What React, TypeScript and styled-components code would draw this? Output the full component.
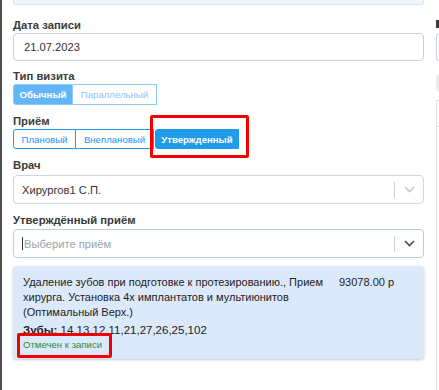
import React from 'react';
import styled, { createGlobalStyle } from 'styled-components';

const GlobalStyle = createGlobalStyle`
    body {
        margin: 0;
        background: #fff;
        font-family: "Liberation Sans", Arial, sans-serif;
        color: #333;
    }
`;

const Page = styled.div`
    display: flex;
    height: 390px;
    border-left: 2px solid #4f4f4f;
    overflow: hidden;
`;

const FormColumn = styled.div`
    width: 411px;
    margin-left: 11px;
    flex-shrink: 0;
`;

const TopBox = styled.div`
    height: 4px;
    background: #eef5fd;
    border: 1px solid #dce4ee;
    border-top: none;
    border-radius: 0 0 3px 3px;
`;

const Field = styled.div<{ $top?: number }>`
    margin-top: ${p => p.$top ?? 8}px;
`;

const Label = styled.div<{ $gap?: number }>`
    font-size: 11.3px;
    font-weight: 700;
    line-height: 16px;
    color: #3a3a3a;
    margin-bottom: ${p => p.$gap ?? 0}px;
`;

const TextInput = styled.div`
    height: 28px;
    box-sizing: border-box;
    border: 1px solid #c6d2e2;
    border-radius: 4px;
    padding: 0 10px;
    display: flex;
    align-items: center;
    font-size: 11.2px;
    color: #333;
`;

const Segments = styled.div`
    display: flex;
    align-items: stretch;
`;

const Segment = styled.div<{ $active?: boolean; $tone: 'soft' | 'strong'; $h: number; $w: number }>`
    box-sizing: border-box;
    height: ${p => p.$h}px;
    width: ${p => p.$w}px;
    display: flex;
    align-items: center;
    justify-content: center;
    font-size: 9.6px;
    font-weight: ${p => (p.$active ? 700 : 400)};
    color: ${p => (p.$active ? '#fff' : p.$tone === 'soft' ? '#8ec4f2' : '#2196f3')};
    background: ${p => (p.$active ? (p.$tone === 'soft' ? '#62b6f6' : '#1e9be9') : '#fff')};
    border: 1px solid ${p => (p.$tone === 'soft' ? '#90cbf7' : '#1e9be9')};
    &:first-child {
        border-radius: 3px 0 0 3px;
    }
    & + & {
        border-left: none;
    }
`;

const LastSegment = styled(Segment)`
    border-radius: 3px;
    margin-left: 1px;
    && {
        border-left: 1px solid #1e9be9;
    }
`;

const Marked = styled.div`
    position: relative;
    display: inline-flex;
`;

const RedFrame = styled.div<{ $t: number; $r: number; $b: number; $l: number }>`
    position: absolute;
    top: ${p => -p.$t}px;
    right: ${p => -p.$r}px;
    bottom: ${p => -p.$b}px;
    left: ${p => -p.$l}px;
    border: 3px solid #f20000;
    border-radius: 2px;
    pointer-events: none;
`;

const Select = styled.div<{ $muted?: boolean }>`
    height: 29px;
    box-sizing: border-box;
    border: 1px solid ${p => (p.$muted ? '#cdd7e4' : '#bccbe0')};
    border-radius: 4px;
    display: flex;
    align-items: center;
    font-size: 11.2px;
`;

const SelectValue = styled.div<{ $placeholder?: boolean }>`
    flex: 1;
    padding-left: 8px;
    display: flex;
    align-items: center;
    color: ${p => (p.$placeholder ? '#9aa3ad' : '#333')};
`;

const Caret = styled.span`
    width: 1px;
    height: 13px;
    background: #333;
    margin-right: 1px;
`;

const Separator = styled.span`
    width: 1px;
    height: 16px;
    background: #cfcfcf;
`;

const Chevron = styled.div<{ $muted?: boolean }>`
    width: 28px;
    display: flex;
    justify-content: center;
    color: ${p => (p.$muted ? '#c8c8c8' : '#4a4a4a')};
`;

const Card = styled.div`
    margin-top: 8px;
    height: 93px;
    box-sizing: border-box;
    background: #dce9fb;
    border-radius: 4px;
    box-shadow: 0 1px 3px rgba(0, 0, 0, 0.22);
    padding: 9px 10px 0 10px;
    font-size: 11px;
    color: #222;
`;

const CardRow = styled.div`
    display: flex;
    line-height: 15px;
`;

const Description = styled.div`
    width: 310px;
`;

const Price = styled.div`
    margin-left: 6px;
    white-space: nowrap;
`;

const Teeth = styled.div`
    margin-top: 3px;
    line-height: 15px;
    font-size: 11.5px;
`;

const Status = styled.div`
    font-size: 9.6px;
    line-height: 13px;
    color: #2f8a2f;
`;

const RightColumn = styled.div`
    margin-left: 12px;
    flex: 1;
    padding-top: 20px;
`;

const RightLabel = styled.div`
    height: 8px;
    width: 6px;
    background: #3a3a3a;
    margin-bottom: 5px;
`;

const RightInput = styled.div`
    height: 28px;
    box-sizing: border-box;
    border: 1px solid #c6d2e2;
    border-right: none;
    border-radius: 4px 0 0 4px;
`;

const RightPill = styled.div`
    margin-top: 13px;
    height: 18px;
    background: #ececec;
    border-radius: 4px 0 0 4px;
`;

const RightPanel = styled.div`
    margin-top: 8px;
    height: 300px;
    border: 1px solid #e2e2e2;
    border-right: none;
`;

const RightPanelHead = styled.div`
    height: 25px;
    border-bottom: 1px solid #e2e2e2;
`;

const ChevronIcon = () => (
    <svg width="11" height="7" viewBox="0 0 11 7">
        <path d="M1 1l4.5 4.5L10 1" fill="none" stroke="currentColor" strokeWidth="1.6" />
    </svg>
);

const App: React.FC = () => {
    return (
        <>
            <GlobalStyle />
            <Page>
                <FormColumn>
                    <TopBox />
                    <Field $top={12}>
                        <Label>Дата записи</Label>
                        <TextInput>21.07.2023</TextInput>
                    </Field>
                    <Field $top={7}>
                        <Label>Тип визита</Label>
                        <Segments>
                            <Segment $tone="soft" $active $h={21} $w={60}>Обычный</Segment>
                            <Segment $tone="soft" $h={21} $w={84}>Параллельный</Segment>
                        </Segments>
                    </Field>
                    <Field $top={8}>
                        <Label>Приём</Label>
                        <Segments>
                            <Segment $tone="strong" $h={20} $w={63}>Плановый</Segment>
                            <Segment $tone="strong" $h={20} $w={78}>Внеплановый</Segment>
                            <Marked>
                                <LastSegment $tone="strong" $active $h={20} $w={84}>Утвержденный</LastSegment>
                                <RedFrame $t={14} $r={10} $b={9} $l={4} />
                            </Marked>
                        </Segments>
                    </Field>
                    <Field $top={8}>
                        <Label $gap={2}>Врач</Label>
                        <Select $muted>
                            <SelectValue>Хирургов1 С.П.</SelectValue>
                            <Separator />
                            <Chevron $muted><ChevronIcon /></Chevron>
                        </Select>
                    </Field>
                    <Field $top={8}>
                        <Label $gap={1}>Утверждённый приём</Label>
                        <Select>
                            <SelectValue $placeholder><Caret />Выберите приём</SelectValue>
                            <Separator />
                            <Chevron><ChevronIcon /></Chevron>
                        </Select>
                    </Field>
                    <Card>
                        <CardRow>
                            <Description>
                                Удаление зубов при подготовке к протезированию., Прием хирурга. Установка 4х имплантатов и мультиюнитов (Оптимальный Верх.)
                            </Description>
                            <Price>93078.00 р</Price>
                        </CardRow>
                        <Teeth><b>Зубы:</b> 14,13,12,11,21,27,26,25,102</Teeth>
                        <Marked>
                            <Status>Отмечен к записи</Status>
                            <RedFrame $t={5} $r={10} $b={7} $l={6} />
                        </Marked>
                    </Card>
                </FormColumn>
                <RightColumn>
                    <RightLabel />
                    <RightInput />
                    <RightPill />
                    <RightPanel>
                        <RightPanelHead />
                    </RightPanel>
                </RightColumn>
            </Page>
        </>
    );
};

export default App;
